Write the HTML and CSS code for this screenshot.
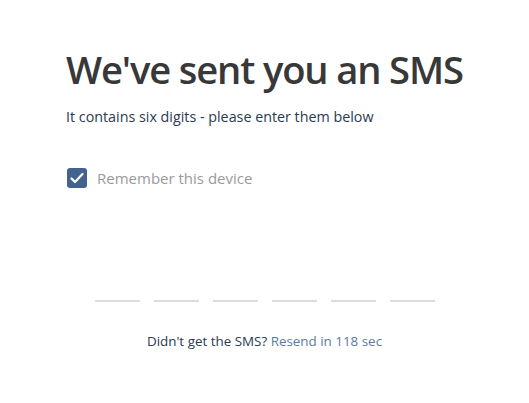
FILE: index.html
```html
<!DOCTYPE html>
<html lang="en">
<head>
<meta charset="utf-8">
<link rel="stylesheet" href="styles.css">
</head>
<body>
<main class="page">
  <h1 class="title">We've sent you an SMS</h1>
  <p class="subtitle">It contains six digits - please enter them below</p>
  <label class="remember">
    <span class="checkbox">
      <svg width="14" height="12" viewBox="0 0 14 12"><path d="M1.5 6.5 L5 10 L12.5 2" fill="none" stroke="#fff" stroke-width="2.2" stroke-linecap="round" stroke-linejoin="round"/></svg>
    </span>
    <span class="remember-text">Remember this device</span>
  </label>
  <div class="digits">
    <span class="digit"></span>
    <span class="digit"></span>
    <span class="digit"></span>
    <span class="digit"></span>
    <span class="digit"></span>
    <span class="digit"></span>
  </div>
  <p class="resend">Didn't get the SMS? <span class="resend-link">Resend in 118 sec</span></p>
</main>
</body>
</html>
```

FILE: styles.css
```css
html, body {
  margin: 0;
  padding: 0;
  background: #fff;
}
body {
  font-family: "Open Sans", "Noto Sans", sans-serif;
  width: 529px;
  height: 403px;
  overflow: hidden;
}
.page {
  padding: 44px 0 0 66px;
  display: flex;
  flex-direction: column;
}
.title {
  margin: 0;
  font-size: 38.2px;
  font-weight: 600;
  color: #383838;
  line-height: 50px;
  letter-spacing: -1.15px;
}
.subtitle {
  margin: 13px 0 0 0;
  font-size: 14.3px;
  line-height: 20px;
  color: #2a3a52;
}
.remember {
  margin-top: 39px;
  display: flex;
  align-items: center;
  gap: 10px;
  margin-left: 1px;
}
.checkbox {
  width: 20px;
  height: 20px;
  border-radius: 3px;
  background: #42638f;
  display: flex;
  align-items: center;
  justify-content: center;
}
.remember-text {
  font-size: 15px;
  color: #9a9a9a;
  line-height: 24px;
}
.digits {
  margin-top: 110px;
  margin-left: 29px;
  display: flex;
  gap: 14px;
}
.digit {
  width: 45px;
  height: 0;
  border-top: 2px solid #dcdcdc;
}
.resend {
  margin: 29px 0 0 -66px;
  width: 529px;
  text-align: center;
  font-size: 13.4px;
  line-height: 20px;
  color: #2a3a52;
}
.resend-link {
  color: #5b7ba3;
}
```
